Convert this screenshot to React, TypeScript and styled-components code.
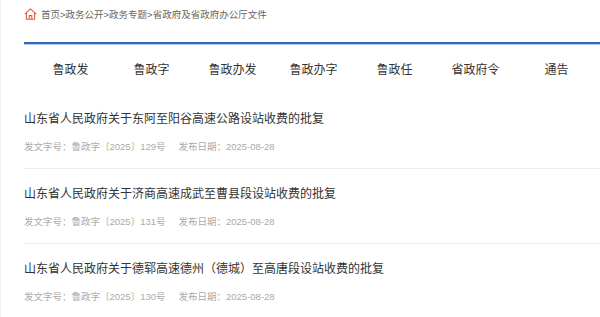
import React from "react";
import styled, { createGlobalStyle } from "styled-components";

const GlobalStyle = createGlobalStyle`
  html, body {
    margin: 0;
    padding: 0;
    background: #fff;
  }
  body {
    font-family: "Liberation Sans", "Noto Sans CJK SC", sans-serif;
  }
`;

const Page = styled.div`
  min-height: 100vh;
  box-sizing: border-box;
  border-left: 1px solid #f0f0f0;
  padding-left: 23px;
`;

const Breadcrumb = styled.div`
  display: flex;
  align-items: center;
  height: 28px;
  font-size: 9.5px;
  color: #666;
  gap: 4px;
`;

const HomeIcon = styled.svg`
  width: 13px;
  height: 12px;
  margin-top: -1px;
  flex-shrink: 0;
`;

const BlueRule = styled.div`
  margin-top: 14px;
  height: 2px;
  background: #3269bb;
  border-bottom: 1px solid #b4cbec;
`;

const NavBar = styled.nav`
  display: grid;
  grid-template-columns: repeat(7, 81px);
  padding-left: 6px;
  height: 49px;
  align-items: center;
`;

const NavItem = styled.a`
  text-align: center;
  font-size: 12px;
  line-height: 20px;
  color: #333;
  text-decoration: none;
  margin-top: 1px;
`;

const List = styled.ul`
  list-style: none;
  margin: 0;
  padding: 0;
`;

const Item = styled.li`
  padding: 15px 0 13px;
  border-bottom: 1px solid #eee;
`;

const Title = styled.a`
  display: block;
  font-size: 12px;
  line-height: 20px;
  color: #333;
  text-decoration: none;
`;

const Meta = styled.div`
  margin-top: 10px;
  display: flex;
  gap: 13px;
  font-size: 9.5px;
  line-height: 16px;
  color: #aaa;
`;

const navItems = ["鲁政发", "鲁政字", "鲁政办发", "鲁政办字", "鲁政任", "省政府令", "通告"];

const docs = [
  { id: 1, title: "山东省人民政府关于东阿至阳谷高速公路设站收费的批复", no: "鲁政字〔2025〕129号", date: "2025-08-28" },
  { id: 2, title: "山东省人民政府关于济商高速成武至曹县段设站收费的批复", no: "鲁政字〔2025〕131号", date: "2025-08-28" },
  { id: 3, title: "山东省人民政府关于德郓高速德州（德城）至高唐段设站收费的批复", no: "鲁政字〔2025〕130号", date: "2025-08-28" },
];

const App = () => {
  return (
    <>
      <GlobalStyle />
      <Page>
        <Breadcrumb>
          <HomeIcon viewBox="0 0 13 12" fill="none" stroke="#e05a45" strokeWidth="1.1" strokeLinejoin="round">
            <path d="M0.8 6.2 L6.5 0.9 L12.2 6.2" />
            <path d="M2.4 5 V11.2 H10.6 V5" />
            <path d="M5.2 11.2 V7.6 H7.8 V11.2" />
          </HomeIcon>
          <span>首页&gt;政务公开&gt;政务专题&gt;省政府及省政府办公厅文件</span>
        </Breadcrumb>
        <BlueRule />
        <NavBar>
          {navItems.map((n) => (
            <NavItem key={n}>{n}</NavItem>
          ))}
        </NavBar>
        <List>
          {docs.map((d) => (
            <Item key={d.id}>
              <Title>{d.title}</Title>
              <Meta>
                <span>发文字号：{d.no}</span>
                <span>发布日期：{d.date}</span>
              </Meta>
            </Item>
          ))}
        </List>
      </Page>
    </>
  );
};

export default App;
